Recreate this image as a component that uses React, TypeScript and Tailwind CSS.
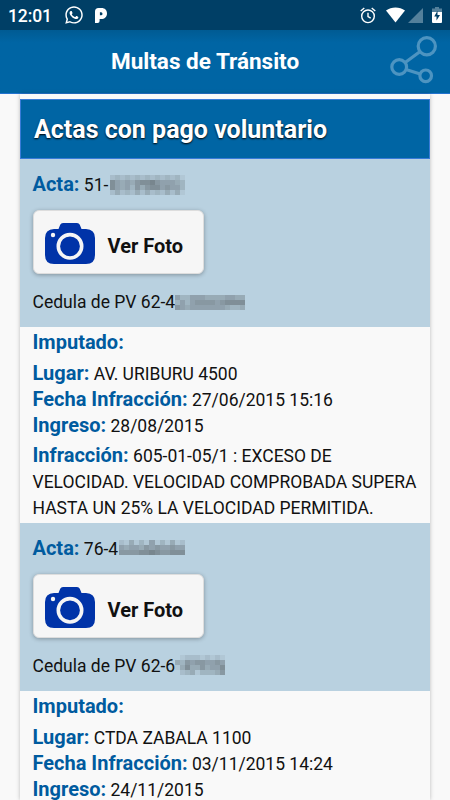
import { FaWhatsapp } from 'react-icons/fa';

type Mosaic = { className: string; rows: string[] };

type Acta = {
  numero: string;
  numeroWidth: string;
  numeroOculto: Mosaic;
  cedula: string;
  cedulaOculta: Mosaic;
  lugar: string;
  fecha: string;
  ingreso: string;
  infraccion?: string;
};

const CELL = 5;

const actas: Acta[] = [
  {
    numero: '51-',
    numeroWidth: 'w-[77.5px]',
    numeroOculto: {
      className: 'w-[75px] h-5 mt-[3px]',
      rows: ['232323232323231', '754546778655543', '754536467756553', '242324242324241'],
    },
    cedula: '62-4',
    cedulaOculta: {
      className: 'w-[70px] h-[15px] mt-1.5',
      rows: ['53355544445544', '35356666567777', '65455555554334'],
    },
    lugar: 'AV. URIBURU 4500',
    fecha: '27/06/2015 15:16',
    ingreso: '28/08/2015',
    infraccion: '605-01-05/1 : EXCESO DE VELOCIDAD. VELOCIDAD COMPROBADA SUPERA HASTA UN 25% LA VELOCIDAD PERMITIDA.',
  },
  {
    numero: '76-4',
    numeroWidth: 'w-[86.5px]',
    numeroOculto: {
      className: 'w-[66px] h-[15px] mt-1',
      rows: ['2141315131412', '5455465655655', '6666778766777'],
    },
    cedula: '62-6',
    cedulaOculta: {
      className: 'w-[50px] h-5 mt-0.5',
      rows: ['0122212121', '4365665565', '1474464557', '0234133346'],
    },
    lugar: 'CTDA ZABALA 1100',
    fecha: '03/11/2015 14:24',
    ingreso: '24/11/2015',
  },
];

const Censored = ({ mosaic }: { mosaic: Mosaic }) => {
  const { rows, className } = mosaic;
  return (
    <svg
      className={`${className} shrink-0`}
      viewBox={`0 0 ${rows[0].length * CELL} ${rows.length * CELL}`}
      preserveAspectRatio="none"
      shapeRendering="crispEdges"
      aria-hidden="true"
    >
      {rows.map((row, y) =>
        row.split('').map((level, x) => (
          <rect
            key={`${x}-${y}`}
            x={x * CELL}
            y={y * CELL}
            width={CELL}
            height={CELL}
            fill="#4d5357"
            fillOpacity={Number(level) * 0.075}
          />
        ))
      )}
    </svg>
  );
};

const PandoraIcon = () => (
  <svg className="w-3 h-[15px]" viewBox="0 0 12 15" fill="#fff">
    <path
      fillRule="evenodd"
      d="M3.5 0H6.5C9.9 0 12 2.2 12 5.4C12 8.8 9.6 11 6.2 11H4.6V13Q4.6 15 2.6 15H0V3.5Q0 0 3.5 0ZM4.9 4.2V7.2H6.1Q7.5 7.2 7.5 5.7Q7.5 4.2 6.1 4.2Z"
    />
  </svg>
);

const AlarmIcon = () => (
  <svg className="w-4 h-[17px]" viewBox="0 0 16 17" fill="none" stroke="#fff" strokeWidth="1.4">
    <circle cx="8" cy="9.3" r="6.3" />
    <path d="M8 5.8V9.6L10.7 11.2M0.7 4L4.3 1M15.3 4L11.7 1" />
  </svg>
);

const WifiIcon = () => (
  <svg className="w-[19px] h-4" viewBox="0 0 19 16" fill="#fff">
    <path d="M0 3.6C5.5 -0.6 13.5 -0.6 19 3.6L9.5 15.5Z" />
  </svg>
);

const SignalIcon = () => (
  <svg className="size-[15px]" viewBox="0 0 15 15" fill="#54809b">
    <path d="M15 0V15H0Z" />
  </svg>
);

const BatteryIcon = () => (
  <svg className="w-[10px] h-4" viewBox="0 0 10 16">
    <path fill="#54809b" d="M3 0H7V1.5H10V5H0V1.5H3Z" />
    <path fill="#fff" d="M0 5H10V15Q10 16 9 16H1Q0 16 0 15Z" />
    <path fill="#003f66" d="M5.5 3.8L2.2 9.6H4.5V13.5L8 8H5.5Z" />
  </svg>
);

const ShareIcon = () => (
  <svg className="size-12" viewBox="0 0 48 48" fill="none" stroke="#4d94c1" strokeWidth="3.2">
    <circle cx="36.8" cy="10.2" r="8.6" />
    <circle cx="9.2" cy="31" r="7.4" />
    <circle cx="35.7" cy="39.8" r="5.8" />
    <path d="M15.2 26.5L29.8 15.8M16 33.5L30.2 38" />
  </svg>
);

const CameraIcon = () => (
  <svg className="mt-1 w-[50px] h-[42px]" viewBox="0 0 50 42">
    <path
      fill="#0033a8"
      d="M18 0H32Q34 0 34.8 1.8L36.5 6H41Q50 6.5 50 15V32Q50 41 41 41H9Q0 41 0 32V15Q0 6.5 9 6H13.5L15.2 1.8Q16 0 18 0Z"
    />
    <circle cx="25" cy="23.3" r="11.7" fill="none" stroke="#f5f5f5" strokeWidth="3.6" />
    <circle cx="8" cy="12" r="2.2" fill="#f5f5f5" />
  </svg>
);

const Label = ({ children }: { children: string }) => (
  <span className="text-xl leading-none font-bold text-[#005b9f]">{children}</span>
);

const ActaItem = ({ acta }: { acta: Acta }) => (
  <article>
    <div className="h-[168px] bg-[#b9d1e0] px-[12.5px] pt-[13px]">
      <div className="flex h-[26px] leading-[26px]">
        <p className={`${acta.numeroWidth} whitespace-nowrap`}>
          <Label>Acta:</Label> {acta.numero}
        </p>
        <Censored mosaic={acta.numeroOculto} />
      </div>
      <button className="mt-3 flex h-16 w-[171.5px] items-center rounded-md border border-[#dddddd] bg-[#f6f6f6] pl-[11.5px] text-xl font-bold shadow-[0_1px_4px_rgba(0,0,0,0.3)]">
        <CameraIcon />
        <span className="ml-[12.5px] pt-[7px]">Ver Foto</span>
      </button>
      <div className="mt-[15px] flex h-[26px] leading-[26px]">
        <p className="w-[142.5px] whitespace-nowrap">Cedula de PV {acta.cedula}</p>
        <Censored mosaic={acta.cedulaOculta} />
      </div>
    </div>
    <div className="h-[196px] px-[12.5px] pt-[3px] leading-[26px]">
      <p className="h-[26px]">
        <Label>Imputado:</Label>
      </p>
      <div className="mt-[5px]">
        <p className="h-[26px]">
          <Label>Lugar:</Label> {acta.lugar}
        </p>
        <p className="h-[26px]">
          <Label>Fecha Infracción:</Label> {acta.fecha}
        </p>
        <p className="h-[26px]">
          <Label>Ingreso:</Label> {acta.ingreso}
        </p>
      </div>
      {acta.infraccion && (
        <p className="mt-1">
          <Label>Infracción:</Label> {acta.infraccion}
        </p>
      )}
    </div>
  </article>
);

export default function App() {
  return (
    <div className="flex h-[800px] w-[450px] flex-col overflow-hidden bg-[#f9f9f9] font-['Roboto',sans-serif] text-[17.5px] text-[#111111]">
      <div className="flex h-[30px] shrink-0 items-center bg-[#003f66] px-2 text-white">
        <span className="w-[43px] pt-[2px] text-[17.5px] font-medium tracking-[-0.1px]">12:01</span>
        <FaWhatsapp className="ml-[13px] size-5" />
        <span className="ml-[11px]">
          <PandoraIcon />
        </span>
        <div className="ml-auto flex items-center">
          <AlarmIcon />
          <span className="ml-[10px]">
            <WifiIcon />
          </span>
          <span className="ml-[3px]">
            <SignalIcon />
          </span>
          <span className="ml-[9px]">
            <BatteryIcon />
          </span>
        </div>
      </div>

      <header className="flex h-16 shrink-0 items-center border-b border-[#2373cf] bg-linear-to-b from-[#005b93] to-[#0065a4] to-20% pr-3 pl-[111px] text-white">
        <h1 className="text-[22.5px] font-bold">Multas de Tránsito</h1>
        <button className="mt-[-3px] ml-auto">
          <ShareIcon />
        </button>
      </header>

      <main className="mx-5 min-h-0 flex-1 pt-[5px] shadow-[0_0_4px_rgba(0,0,0,0.25)]">
        <h2 className="flex h-[60px] items-center border border-[#387bd8] bg-[#0065a4] pt-0.5 pl-[13px] text-[25px] font-bold text-white [text-shadow:0_1px_2px_#000]">
          Actas con pago voluntario
        </h2>
        {actas.map((acta) => (
          <ActaItem key={acta.numero} acta={acta} />
        ))}
      </main>
    </div>
  );
}
